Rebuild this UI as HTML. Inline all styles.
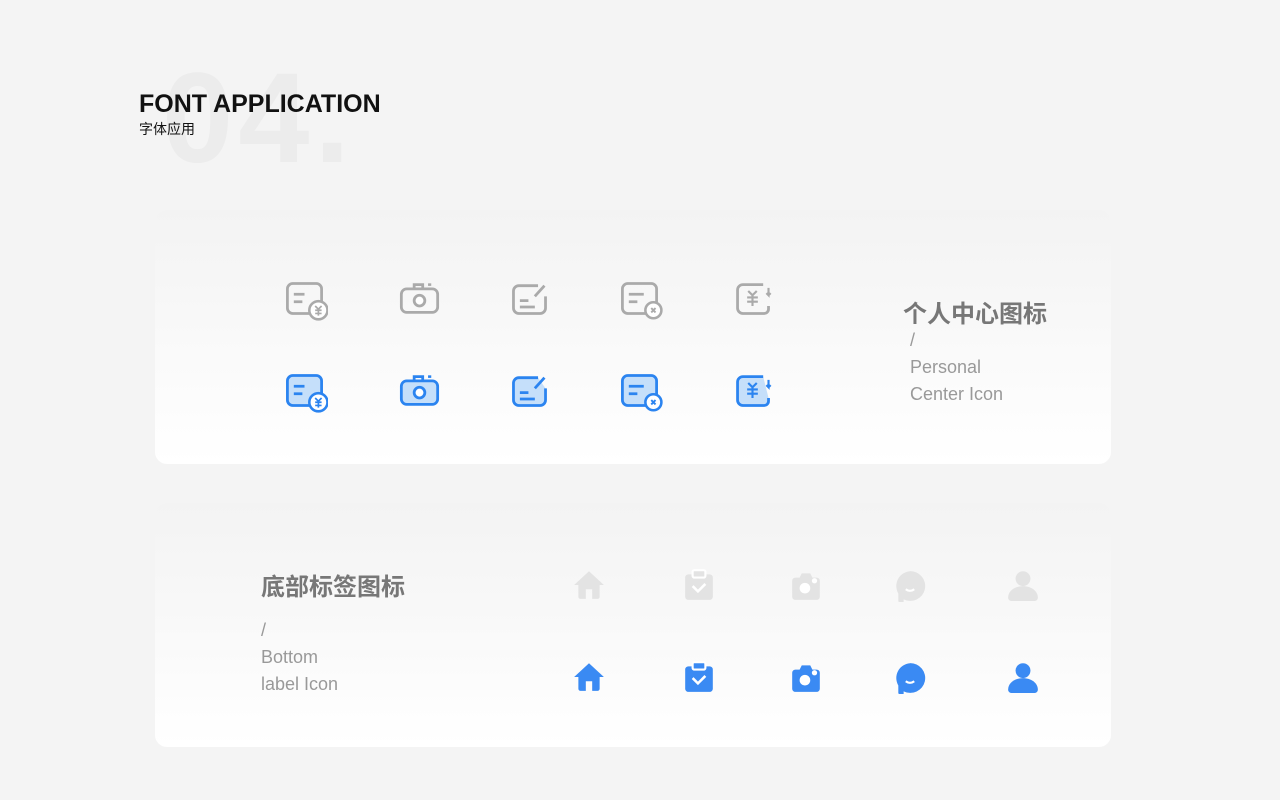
<!DOCTYPE html>
<html><head><meta charset="utf-8"><style>
body{margin:0;width:1280px;height:800px;background:#f4f4f4;position:relative;overflow:hidden;font-family:"Liberation Sans","Noto Sans CJK SC",sans-serif}
.big{position:absolute;left:162px;top:55px;font-size:128px;font-weight:bold;color:#ececec;letter-spacing:5px;line-height:1}
.t1{position:absolute;left:139px;top:90px;font-size:25px;font-weight:bold;color:#111;letter-spacing:0px}
.t2{position:absolute;left:139px;top:119px;font-size:14px;color:#111}
.card{position:absolute;left:155px;width:956px;border-radius:12px;background:linear-gradient(#f3f3f3,#fff)}
.ic{position:absolute;width:47px;height:47px}
.b{position:absolute;width:34px;height:34px}
.h{position:absolute;font-size:24px;font-weight:bold;color:#777}
.s{position:absolute;font-size:18px;color:#999;line-height:27px}
</style></head><body>
<div class="big">04.</div>
<div class="t1">FONT APPLICATION</div>
<div class="t2">字体应用</div>
<div class="card" style="top:210px;height:254px"></div>
<div class="card" style="top:503px;height:244px"></div>

<svg width="0" height="0" style="position:absolute">
<defs>
<g id="a"><rect x="6" y="8" width="32" height="28" rx="5" fill="var(--f)" stroke="currentColor" stroke-width="2.6"/><path d="M12 18h10M12 25h8" stroke="currentColor" stroke-width="2.6"/><circle cx="35" cy="33" r="8.5" fill="#fff" stroke="currentColor" stroke-width="2.4"/><path d="M32 29l3 3 3-3M35 32v6M32 33h6M32 36h6" stroke="currentColor" stroke-width="1.6" fill="none"/></g>
<g id="b"><path d="M17 12v-3h8v3" fill="none" stroke="currentColor" stroke-width="2.6"/><path d="M30 9h3" stroke="currentColor" stroke-width="2.4"/><rect x="5" y="13" width="34" height="22" rx="5" fill="var(--f)" stroke="currentColor" stroke-width="2.6"/><circle cx="22" cy="24" r="5" fill="#fff" stroke="currentColor" stroke-width="2.6"/></g>
<g id="c"><path d="M30 10H12a5 5 0 0 0-5 5v16a5 5 0 0 0 5 5h20a5 5 0 0 0 5-5V20" fill="var(--f)" stroke="currentColor" stroke-width="2.6"/><path d="M27 20l9-10M13 24h8M13 30h14" stroke="currentColor" stroke-width="2.6"/></g>
<g id="d"><rect x="6" y="8" width="32" height="28" rx="5" fill="var(--f)" stroke="currentColor" stroke-width="2.6"/><path d="M12 18h14M12 25h8" stroke="currentColor" stroke-width="2.6"/><circle cx="35" cy="33" r="7.5" fill="#fff" stroke="currentColor" stroke-width="2.4"/><path d="M33 31l4 4M37 31l-4 4" stroke="currentColor" stroke-width="1.8"/></g>
<g id="e"><path d="M32 9H13a5 5 0 0 0-5 5v17a5 5 0 0 0 5 5h20a4 4 0 0 0 4-4v-3" fill="var(--f)" stroke="currentColor" stroke-width="2.6"/><path d="M37 12v7l-2-2M37 19l2-2" stroke="currentColor" stroke-width="2" fill="none"/><path d="M18 15l4 4 4-4M22 19v10M17 21h10M17 25h10" stroke="currentColor" stroke-width="2" fill="none"/></g>
<g id="h"><path d="M16 3L2 16h4v11a2 2 0 0 0 2 2h5v-9h6v9h5a2 2 0 0 0 2-2V16h4z" fill="currentColor"/></g>
<g id="k"><rect x="3" y="6" width="26" height="24" rx="3" fill="currentColor"/><rect x="10" y="2" width="12" height="7" rx="1.5" fill="currentColor" stroke="#fff" stroke-width="2"/><path d="M10 17l5 5 7-7" stroke="#fff" stroke-width="2.4" fill="none"/></g>
<g id="m"><path d="M3 12a3 3 0 0 1 3-3h4l2-4h8l2 4h4a3 3 0 0 1 3 3v15a3 3 0 0 1-3 3H6a3 3 0 0 1-3-3z" fill="currentColor"/><circle cx="15" cy="19" r="5" fill="#fff"/><circle cx="24" cy="12" r="2.5" fill="#fff"/></g>
<g id="n"><path d="M16 3a14 14 0 1 1-6 26.5V32H6a1 1 0 0 1-1-1v-7A14 14 0 0 1 16 3z" fill="currentColor"/><path d="M12 20q4 3 8 0" stroke="#fff" stroke-width="2" fill="none"/></g>
<g id="p"><circle cx="16" cy="10" r="7" fill="currentColor"/><path d="M2 28c0-7 7-11 14-11s14 4 14 11a3 3 0 0 1-3 3H5a3 3 0 0 1-3-3z" fill="currentColor"/></g>
</defs></svg>

<svg class="ic" viewBox="0 0 44 44" style="left:281px;top:275px;color:#aaa;--f:none"><use href="#a"/></svg>
<svg class="ic" viewBox="0 0 44 44" style="left:396px;top:275px;color:#aaa;--f:none"><use href="#b"/></svg>
<svg class="ic" viewBox="0 0 44 44" style="left:506px;top:275px;color:#aaa;--f:none"><use href="#c"/></svg>
<svg class="ic" viewBox="0 0 44 44" style="left:616px;top:275px;color:#aaa;--f:none"><use href="#d"/></svg>
<svg class="ic" viewBox="0 0 44 44" style="left:729px;top:275px;color:#aaa;--f:none"><use href="#e"/></svg>
<svg class="ic" viewBox="0 0 44 44" style="left:281px;top:367px;color:#2b84f0;--f:#c5dffa"><use href="#a"/></svg>
<svg class="ic" viewBox="0 0 44 44" style="left:396px;top:367px;color:#2b84f0;--f:#c5dffa"><use href="#b"/></svg>
<svg class="ic" viewBox="0 0 44 44" style="left:506px;top:367px;color:#2b84f0;--f:#c5dffa"><use href="#c"/></svg>
<svg class="ic" viewBox="0 0 44 44" style="left:616px;top:367px;color:#2b84f0;--f:#c5dffa"><use href="#d"/></svg>
<svg class="ic" viewBox="0 0 44 44" style="left:729px;top:367px;color:#2b84f0;--f:#c5dffa"><use href="#e"/></svg>

<svg class="b" viewBox="0 0 32 32" style="left:572px;top:568px;color:#e3e3e3"><use href="#h"/></svg>
<svg class="b" viewBox="0 0 32 32" style="left:682px;top:568px;color:#e3e3e3"><use href="#k"/></svg>
<svg class="b" viewBox="0 0 32 32" style="left:789px;top:568px;color:#e3e3e3"><use href="#m"/></svg>
<svg class="b" viewBox="0 0 32 32" style="left:893px;top:568px;color:#e3e3e3"><use href="#n"/></svg>
<svg class="b" viewBox="0 0 32 32" style="left:1006px;top:568px;color:#e3e3e3"><use href="#p"/></svg>
<svg class="b" viewBox="0 0 32 32" style="left:572px;top:660px;color:#3a8af3"><use href="#h"/></svg>
<svg class="b" viewBox="0 0 32 32" style="left:682px;top:660px;color:#3a8af3"><use href="#k"/></svg>
<svg class="b" viewBox="0 0 32 32" style="left:789px;top:660px;color:#3a8af3"><use href="#m"/></svg>
<svg class="b" viewBox="0 0 32 32" style="left:893px;top:660px;color:#3a8af3"><use href="#n"/></svg>
<svg class="b" viewBox="0 0 32 32" style="left:1006px;top:660px;color:#3a8af3"><use href="#p"/></svg>

<div class="h" style="left:903px;top:294px">个人中心图标</div>
<div class="s" style="left:910px;top:327px">/<br>Personal<br>Center Icon</div>
<div class="h" style="left:261px;top:567px">底部标签图标</div>
<div class="s" style="left:261px;top:617px">/<br>Bottom<br>label Icon</div>
</body></html>
